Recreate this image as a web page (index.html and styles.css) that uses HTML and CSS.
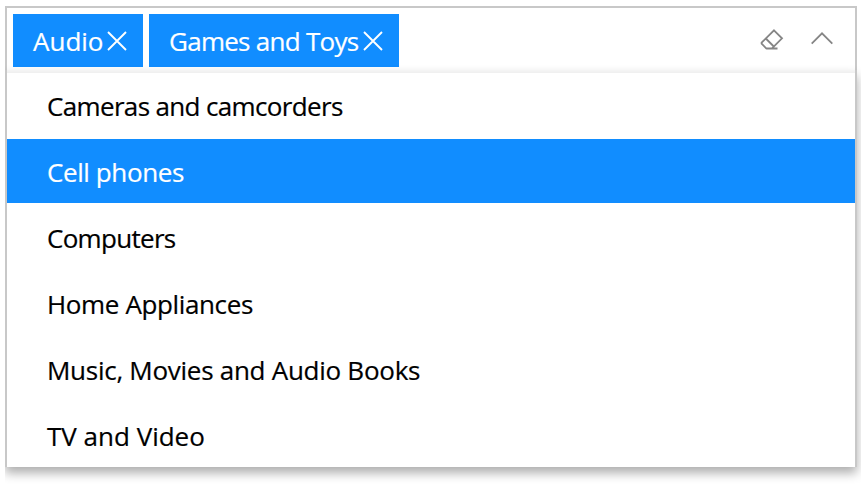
FILE: index.html
```html
<!DOCTYPE html>
<html lang="en">
<head>
<meta charset="utf-8">
<title>Categories</title>
<link rel="stylesheet" href="styles.css">
</head>
<body>
<div class="frame">
  <div class="control">
    <div class="field">
      <div class="tag"><span class="t-audio">Audio</span><svg class="close" viewBox="0 0 20 20"><path d="M1 1 19 19M19 1 1 19"/></svg></div>
      <div class="tag tag-wide"><span class="t-games">Games and Toys</span><svg class="close" viewBox="0 0 20 20"><path d="M1 1 19 19M19 1 1 19"/></svg></div>
      <div class="actions">
        <svg class="eraser" viewBox="0 0 24 22"><path d="M14 1.3 22 9.3 12 19.3H6.2L1.6 14.7V13.7ZM5.8 9.5 13.8 17.5M6.2 19.5H17.5"/></svg>
        <svg class="chevron" viewBox="0 0 22 13"><path d="M.7 11.7 11 1.3 21.3 11.7"/></svg>
      </div>
    </div>
    <ul class="menu">
      <li><span class="t-cameras">Cameras and camcorders</span></li>
      <li class="active"><span class="t-cell">Cell phones</span></li>
      <li><span class="t-computers">Computers</span></li>
      <li><span class="t-home">Home Appliances</span></li>
      <li><span class="t-music">Music, Movies and Audio Books</span></li>
      <li><span class="t-tv">TV and Video</span></li>
    </ul>
  </div>
</div>
</body>
</html>
```
FILE: styles.css
```css
* { box-sizing: border-box; }
body { margin: 0; background: #fff; font: 26px/36px "Open Sans", "Noto Sans", sans-serif; color: #000; }
span { -webkit-text-stroke: .2px currentColor; }
.t-games { letter-spacing: -.73px; }
.t-cameras { letter-spacing: -.65px; }
.t-cell { letter-spacing: -.4px; }
.t-computers { letter-spacing: -.7px; }
.t-home { letter-spacing: -.37px; }
.t-music { letter-spacing: -.27px; }
.frame { width: 856px; margin-left: 5px; padding: 6px 4px 23px 0; overflow: hidden; }
.control { width: 852px; }
.field { display: flex; height: 64px; padding: 6px; border: 2px solid #c8c8c8; border-bottom: 0; }
.tag { display: flex; align-items: center; justify-content: space-between; width: 130px; height: 53px; margin-right: 6px; padding: 0 16px 0 20px; background: #118dff; color: #fff; white-space: nowrap; }
.tag-wide { width: 250px; }
.tag span { padding-top: 1px; }
svg { display: block; fill: none; }
.close { flex: none; width: 20px; height: 20px; stroke: #fff; stroke-width: 1.9; }
.actions { display: flex; gap: 27px; margin: 15px 16px 0 auto; }
.actions svg { stroke: #858585; stroke-width: 1.8; }
.eraser { width: 24px; height: 22px; }
.chevron { width: 22px; height: 13px; margin-top: 3px; }
.menu { position: relative; height: 397px; margin: 0; padding: 3px 0 0; list-style: none; border: 2px solid #c8c8c8; border-top: 0; border-bottom: 0; box-shadow: 0 6px 10px rgba(0, 0, 0, .32); background: linear-gradient(#f5f5f5, #efefef 3px, #fff 3px); }
.menu li { height: 66px; padding: 15px 40px; white-space: nowrap; }
.menu .active { height: 64px; margin-bottom: 2px; background: #118dff; color: #fff; }
```
